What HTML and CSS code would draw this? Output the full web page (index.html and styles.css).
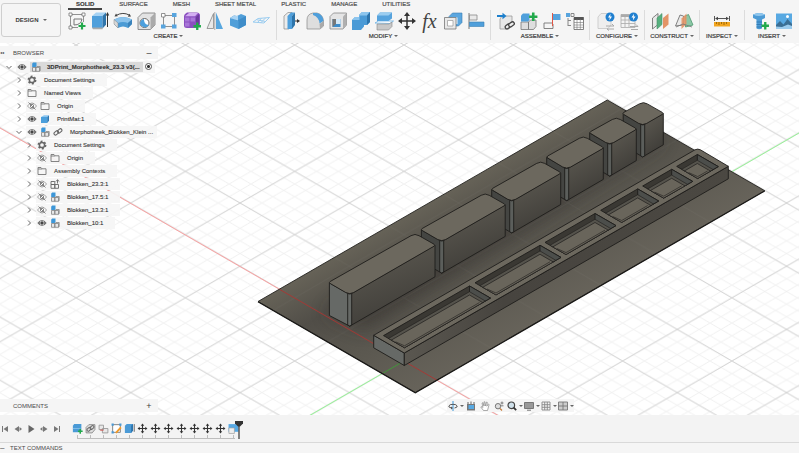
FILE: index.html
```html
<!DOCTYPE html>
<html lang="en">
<head>
<meta charset="utf-8">
<title>3DPrint_Morphotheek_23.3</title>
<link rel="stylesheet" href="styles.css">
</head>
<body>
<svg class="defs" aria-hidden="true">
  <defs>
    <symbol id="plus" viewBox="0 0 8 8"><path d="M4 .5v7M.5 4h7" stroke="#22a94b" stroke-width="2.2"/></symbol>
    <symbol id="eye" viewBox="0 0 10 10"><path d="M.4 5Q5-1.200 9.600 5 5 11.200 .4 5z" fill="#6a6a6a"/><circle cx="5" cy="5" r="2.300" fill="#f0f0f0"/><circle cx="5" cy="5" r="1.700" fill="#444"/></symbol>
    <symbol id="eye-off" viewBox="0 0 10 10"><path d="M.5 5Q5-1 9.500 5 5 11 .5 5z" fill="#fff" stroke="#888" stroke-width=".8"/><circle cx="5" cy="5" r="1.700" fill="none" stroke="#777" stroke-width=".9"/><path d="M1.500 1.500l7 7" stroke="#777" stroke-width=".9"/></symbol>
    <symbol id="gear" viewBox="0 0 10 10"><circle cx="5" cy="5" r="3.700" fill="none" stroke="#666" stroke-width="1.500" stroke-dasharray="1.940 1.940"/><circle cx="5" cy="5" r="2.600" fill="#f5f5f5" stroke="#666" stroke-width="1.500"/></symbol>
    <symbol id="folder" viewBox="0 0 10 10"><path d="M1 8.500v-7h3l1 1.300h4v5.700zM1 3h4" fill="none" stroke="#777" stroke-width=".9"/></symbol>
    <symbol id="body" viewBox="0 0 10 10"><path d="M1 3l3-1.800h5L7.200 3z" fill="#8cc6f0"/><path d="M1 3h6.200v6H1z" fill="#4a9fdc"/><path d="M7.200 3L9 1.200v5.600L7.200 9z" fill="#2c78b4"/></symbol>
    <symbol id="component" viewBox="0 0 10 10"><path d="M1.500 5.500v3.800h3.300V5.500zM4.800 5.500h3.700v3.800H4.800zM4.800 5.500l1-1h3.400v4l-.7.800" fill="#e8e8e8" stroke="#777" stroke-width=".7"/><path d="M1.200 1.500l1-.9h3.300v3.500l-.8.900H1.200z" fill="#3d97d8"/></symbol>
    <symbol id="component-gray" viewBox="0 0 10 10"><path d="M1 2.500h3.800v3H1zM1 5.500v3.800h3.800V5.500zM4.800 5.500h3.700v3.800H4.800zM7.500 4.500V.8M5.800 2.500L7.500.8l1.800 1.700" fill="none" stroke="#666" stroke-width=".9"/></symbol>
    <symbol id="link" viewBox="0 0 10 10"><g fill="none" stroke="#666" stroke-width="1.100"><rect x=".8" y="4.400" width="5" height="3" rx="1.500" transform="rotate(-40 3.300 5.900)"/><rect x="4.200" y="2.400" width="5" height="3" rx="1.500" transform="rotate(-40 6.700 3.900)"/></g></symbol>
    <symbol id="chev-right" viewBox="0 0 10 10"><path d="M4 2.500L6.500 5 4 7.500" fill="none" stroke="#666" stroke-width="1"/></symbol>
    <symbol id="chev-down" viewBox="0 0 10 10"><path d="M2.500 4L5 6.500 7.500 4" fill="none" stroke="#666" stroke-width="1"/></symbol>
    <symbol id="move" viewBox="0 0 10 10"><path d="M5 1.500v7M1.500 5h7" stroke="#333" stroke-width="1"/><path d="M5 .5l1.600 2H3.400zM5 9.500l1.600-2H3.400zM.5 5l2-1.600v3.200zM9.500 5l-2-1.600v3.200z" fill="#333"/></symbol>

    <pattern id="minor" width="21.860" height="12.640" patternUnits="userSpaceOnUse" patternTransform="translate(404 361)">
      <path d="M0 0l21.860 12.640M0 12.640L21.860 0" stroke="#e7e7e7" stroke-width=".6"/>
    </pattern>
    <pattern id="major" width="109.300" height="63.200" patternUnits="userSpaceOnUse" patternTransform="translate(404 361)">
      <path d="M0 0l109.300 63.200M0 63.200L109.300 0" stroke="#cccccc" stroke-width=".8"/>
    </pattern>
    <linearGradient id="side" x1=".3" y1="0" x2=".7" y2="1"><stop offset="0" stop-color="#5c5951"/><stop offset="1" stop-color="#3c3a36"/></linearGradient>
    <linearGradient id="long-side" gradientUnits="userSpaceOnUse" x1="0" y1="0" x2="330" y2="0"><stop offset="0" stop-color="#5a5750"/><stop offset=".3" stop-color="#47443f"/><stop offset="1" stop-color="#4b4842"/></linearGradient>
    <linearGradient id="plate" gradientUnits="userSpaceOnUse" x1="430" y1="190" x2="520" y2="345"><stop offset="0" stop-color="#6b675b"/><stop offset=".3" stop-color="#514e48"/><stop offset=".6" stop-color="#5b5850"/><stop offset="1" stop-color="#69655c"/></linearGradient>
    <filter id="soft" x="-20%" y="-20%" width="140%" height="140%"><feGaussianBlur stdDeviation="9"/></filter>
    <clipPath id="plate-clip"><path d="M258 301.500L607.300 100l157.400 90.700L415.300 392.500z"/></clipPath>
  </defs>
</svg>

<header class="toolbar">
  <button class="workspace">DESIGN <i class="caret"></i></button>
  <div class="ribbon">
    <nav class="tabs">
      <a class="tab active" href="#solid">SOLID</a><a class="tab" href="#surface">SURFACE</a><a class="tab" href="#mesh">MESH</a><a class="tab" href="#sheet">SHEET METAL</a><a class="tab" href="#plastic">PLASTIC</a><a class="tab" href="#manage">MANAGE</a><a class="tab" href="#utilities">UTILITIES</a>
    </nav>
    <div class="groups">
      <section class="group first">
        <div class="tools">
          <button aria-label="Create Sketch"><svg viewBox="0 0 22 22"><path d="M4 4.500h14M4.500 4v14M4 17.500h8M17.500 4v8" fill="none" stroke="#777" stroke-width=".8"/><path d="M3 3h3v3H3zM16 3h3v3h-3zM3 16h3v3H3z" fill="#fff" stroke="#666" stroke-width=".7"/><path d="M8 15V9M8 9h8Q15 15 8 15" fill="none" stroke="#777"/><use href="#plus" x="12" y="12" width="8" height="8"/></svg></button>
          <button aria-label="Extrude"><svg viewBox="0 0 22 22"><path d="M3 6l4-3.500h10L13.500 6z" fill="#a6d2f3"/><path d="M3 6h10.500v12.500H4L3 17.500z" fill="#4f9fdb"/><path d="M13.500 6L17 2.500v12.200l-3.500 3.800z" fill="#2f75ab"/><path d="M3 17.500h10.500v1.800H4z" fill="#aaa"/><path d="M18.500 17V5" stroke="#333" stroke-width="1"/><path d="M18.500 2l1.700 3.500h-3.400z" fill="#333"/></svg></button>
          <button aria-label="Revolve"><svg viewBox="0 0 22 22"><path d="M2 9.500q9-5 18 0v4.500l-4 4q-5-3-10 0l-4-4z" fill="#4b9bd5"/><path d="M2 9.500q9-5 18 0l-4 3.500q-5-2-10 0z" fill="#8bc3ec"/><path d="M16 13l4-3.500V14l-4 4z" fill="#3b83bb"/><path d="M2 9.500L6 13v5l-4-4z" fill="#d8d8d8" stroke="#888" stroke-width=".5"/><path d="M4 5.500q7-4 13.500-.3" fill="none" stroke="#444"/><path d="M2.500 6.500L4 3.500l1.800 2.700zM19 6.500l-3.200.2 1.700-3z" fill="#444"/></svg></button>
          <button aria-label="Hole"><svg viewBox="0 0 22 22"><path d="M3 7.500L7.500 3H20v12l-4.500 4.500H3z" fill="#e3e3e3" stroke="#777" stroke-width=".8"/><path d="M15.500 7.500L20 3v12l-4.500 4.500z" fill="#aaa"/><circle cx="9.500" cy="13" r="4.500" fill="#fff" stroke="#666"/><path d="M9 9q-.5 5.500 5 6a5 5 0 0 1-9-1Q5 10 9 9z" fill="#4da0dd"/></svg></button>
          <button aria-label="Rectangular Pattern"><svg viewBox="0 0 22 22"><path d="M5.500 5.500h11M5.500 5.500v11M7 16.500h8M16.500 7v8" stroke="#777" stroke-width=".8"/><path d="M3.500 3.500H7V7H3.500z" fill="#fff" stroke="#777" stroke-width=".8"/><path d="M14 3h4.500v4H14zM3 14.500h4.500v4H3zM14 14.500h4.500v4H14z" fill="#57a4de"/></svg></button>
          <button aria-label="Create Form"><svg viewBox="0 0 22 22"><path d="M3 6q0-2 3-3.500h10q2 0 3 2v9q0 3-4 4.500H6q-3 0-3-2.500z" fill="#8b4fc0"/><path d="M4 6.200L8 3h9l-3 3.200z" fill="#d3aef2"/><path d="M4 7.500h4.500v4H4zM9.500 7.500H14v4H9.500zM4 12.500h4.500v4H4z" fill="#a876d8"/><path d="M15 7l3-3v12l-3 2z" fill="#6c3a9d"/><use href="#plus" x="12" y="12" width="8.500" height="8.500"/></svg></button>
          <button aria-label="Mirror"><svg viewBox="0 0 22 22"><path d="M9.500 3.500v15H3z" fill="#e8e8e8" stroke="#888" stroke-width=".8"/><path d="M12 2.500l7 16.500h-7z" fill="#58a7df"/><path d="M10.800 2v18" stroke="#888" stroke-width=".7"/></svg></button>
          <button aria-label="Thicken"><svg viewBox="0 0 22 22"><path d="M3 8l7 2V6l4-2 5 2v9l-7.500 4L3 15.500z" fill="#519fd9"/><path d="M3 8l4-2.500 4 .8v4L19 6v9l-7.500 4V11z" fill="#3f8dc9"/><path d="M3 8l4-2.500 4 .5v4.500z" fill="#a9d4f4"/></svg></button>
          <button aria-label="Boundary Fill"><svg viewBox="0 0 22 22"><path d="M3 12l5-3.500 11.500-1L14 13zM6.500 9.700l9 1.800M11.500 8.200l-4 4.300M15.500 8l-5 5M5 12.500l-1-1" fill="none" stroke="#9ccdf0" stroke-width="1"/></svg></button>
        </div>
        <button class="group-label">CREATE <i class="caret"></i></button>
      </section>
      <section class="group">
        <div class="tools">
          <button aria-label="Press Pull"><svg viewBox="0 0 22 22"><path d="M3 6l4-3.500h4L8 6v13H3z" fill="#ececec" stroke="#888" stroke-width=".7"/><path d="M6.500 6L10 2.500h4L11 6v13H6.500z" fill="#4f9fdb"/><path d="M11 6l3-3.500V15l-3 4z" fill="#2d74aa"/><path d="M14 11h3" stroke="#333"/><path d="M19 11l-3-2v4z" fill="#333"/></svg></button>
          <button aria-label="Fillet"><svg viewBox="0 0 22 22"><path d="M3 19V10Q3 4 9 3h4q6 1.500 6.500 8v5L16 19z" fill="#dedede" stroke="#888" stroke-width=".7"/><path d="M9 3h4q6 1.500 6.500 8l-4 2.500Q15 7 9 5z" fill="#4f9fdb"/><path d="M15.500 14l4-3v5L16 19z" fill="#aaa"/></svg></button>
          <button aria-label="Shell"><svg viewBox="0 0 22 22"><path d="M3 6.500L6.500 3h13v12L16 19H3z" fill="#e5e5e5" stroke="#888" stroke-width=".8"/><path d="M16 6.500L19.500 3v12L16 19z" fill="#b0b0b0"/><path d="M5.500 9h8v8h-8z" fill="#3e8dcb"/><path d="M5.500 9H9v5l-3.500 3z" fill="#777"/><path d="M9 9h4.500v5H9z" fill="#d4e9f8"/></svg></button>
          <button aria-label="Combine"><svg viewBox="0 0 22 22"><path d="M2 10l3-3h4V5l3-3h8v10l-3 3h-3v1.500L11 20H2z" fill="#4a9ad6"/><path d="M2 10l3-3h4V5l3-3h8l-3 3.500H9.500V10z" fill="#8cc5ee"/><path d="M17 5.500L20 2v10l-3 3z" fill="#2c74ac"/></svg></button>
          <button aria-label="Split Body"><svg viewBox="0 0 22 22"><path d="M4 5.500L7 2.500h12v6L15.500 11H4z" fill="#56a3dd"/><path d="M4 5.500L7 2.500h12l-3.500 3z" fill="#9bcdf0"/><path d="M2 13l3.500-2h15L17 13.500z" fill="#fff" stroke="#5aa7df" stroke-width=".7"/><path d="M4 14h12l3-2v4.500L15.500 20H4z" fill="#c8c8c8" stroke="#888" stroke-width=".6"/></svg></button>
          <button aria-label="Move"><svg viewBox="0 0 22 22"><path d="M11 4v14M4 11h14" stroke="#333" stroke-width="1.500"/><path d="M11 2l3 4H8zM11 20l3-4H8zM2 11l4-3v6zM20 11l-4-3v6z" fill="#333"/></svg></button>
          <button class="fx" aria-label="Parameters">fx</button>
          <button aria-label="Scale"><svg viewBox="0 0 22 22"><path d="M7 6.500L10.500 3h9.500v9.500L16.500 16H7z" fill="#5aa6df" stroke="#3b7eb1" stroke-width=".6"/><path d="M9.500 7.500h6V14h-6z" fill="#eaf4fb"/><path d="M2.500 7.500H14V19H2.500z" fill="#e9e9e9" stroke="#777" stroke-width=".8"/><path d="M5.500 10.500H11V16H5.500z" fill="#fff" stroke="#888" stroke-width=".6"/></svg></button>
          <button aria-label="Align"><svg viewBox="0 0 22 22"><path d="M4 3v16" stroke="#777"/><path d="M4.500 5H12v5H4.500z" fill="#e9e9e9" stroke="#888" stroke-width=".8"/><path d="M4.500 12H19v4.500H4.500z" fill="#4f9fdb" stroke="#3a7fb4" stroke-width=".6"/></svg></button>
        </div>
        <button class="group-label">MODIFY <i class="caret"></i></button>
      </section>
      <section class="group">
        <div class="tools">
          <button aria-label="Insert Component"><svg viewBox="0 0 22 22"><path d="M5 9l2-3h10v9l-3 4H5z" fill="#e7e7e7" stroke="#999" stroke-width=".8"/><path d="M2 6h6" stroke="#1d7fcc" stroke-width="2"/><path d="M11.500 6L7.500 2.800v6.400z" fill="#1d7fcc"/><g fill="#eee" stroke="#444" stroke-width="1.300"><rect x="10" y="14.500" width="6" height="3.600" rx="1.800" transform="rotate(-35 13 16.300)"/><rect x="13.500" y="12.500" width="6" height="3.600" rx="1.800" transform="rotate(-35 16.500 14.300)"/></g></svg></button>
          <button aria-label="New Component"><svg viewBox="0 0 22 22"><path d="M3 12h7.500v7.500H3zM10.500 12l2-2H18v6.500L15.500 19.500h-5z" fill="#dedede" stroke="#777" stroke-width=".8"/><path d="M3 5.500L5 3.500h6.500V10l-1.500 1.500H3z" fill="#4f9fdb"/><use href="#plus" x="10.500" y="2" width="9.500" height="9.500"/></svg></button>
          <button aria-label="Joint"><svg viewBox="0 0 22 22"><path d="M3 13h8M3 13v5.500h9V14" fill="none" stroke="#777" stroke-width=".9"/><path d="M11.500 4h8v6h-8z" fill="#57a4de"/><path d="M11.500 3v13" stroke="#e05545" stroke-width="1" fill="none"/></svg></button>
          <button aria-label="Bill of Materials"><svg viewBox="0 0 22 22"><path d="M2 3h4v4H2z" fill="#57a4de"/><path d="M7 3.500h3v3H7zM4 8v8M4 10.500h3M4 15.500h3" fill="none" stroke="#888"/><path d="M10 7.500h9.500v12H10z" fill="#fff" stroke="#666" stroke-width=".8"/><path d="M10 7h9.500v3H10z" fill="#555"/><path d="M10 12.500h9.500M10 15h9.500M10 17.300h9.500M13 9v10M16.300 9v10" stroke="#777" stroke-width=".6"/></svg></button>
        </div>
        <button class="group-label">ASSEMBLE <i class="caret"></i></button>
      </section>
      <section class="group roomy">
        <div class="tools">
          <button aria-label="Configure Design"><svg viewBox="0 0 22 22"><path d="M3 7l3-3.500h10V15l-3 3.500H3z" fill="#eee" stroke="#c5c5c5" stroke-width=".8"/><circle cx="15" cy="7" r="4.500" fill="#2180d0"/><path d="M15.500 3.800L13 7.500h1.800l-.5 3 2.700-4h-1.800z" fill="#fff"/><path d="M11 16h8M17 14l2 2M19 19h-7l2 1.500" fill="none" stroke="#aaa"/></svg></button>
          <button aria-label="Configuration Table"><svg viewBox="0 0 22 22"><path d="M3 4.500h14v13H3z" fill="#f4f4f4" stroke="#aaa" stroke-width=".8"/><path d="M3 4.500h14v2.500H3z" fill="#aaa"/><path d="M3 10h14M3 13.500h14M7 7v10M11 7v10" stroke="#aaa" stroke-width=".8"/><circle cx="15.500" cy="7" r="4.500" fill="#2180d0"/><path d="M16 3.800l-2.500 3.700h1.800l-.5 3 2.700-4h-1.800z" fill="#fff"/><path d="M12 16.500h8M18 14.500l2 2M20 19.500h-7" fill="none" stroke="#aaa"/></svg></button>
        </div>
        <button class="group-label">CONFIGURE <i class="caret"></i></button>
      </section>
      <section class="group roomy">
        <div class="tools">
          <button aria-label="Offset Plane"><svg viewBox="0 0 22 22"><path d="M2.500 8L8 3.500v11L2.500 19z" fill="#e9e9e9" stroke="#666" stroke-width=".8"/><path d="M7 8l5-4.500v11L7 19z" fill="#56b07e" stroke="#4c8f6a" stroke-width=".6"/><path d="M13 8l5.500-4.500v11L13 19z" fill="#e39467"/></svg></button>
          <button aria-label="Plane at Angle"><svg viewBox="0 0 22 22"><path d="M2.500 16L7 5l3.500 1v9z" fill="#e9e9e9" stroke="#666" stroke-width=".8"/><path d="M12 6l3.500-1.500L20 15l-7.500 2z" fill="#8cc7a6" stroke="#4c9a70" stroke-width=".8"/><path d="M8.500 8.500l5-5V14l-5 5z" fill="#e39467" fill-opacity=".9"/><path d="M3 17l7-3 9 3" fill="none" stroke="#777" stroke-width=".8"/></svg></button>
        </div>
        <button class="group-label">CONSTRUCT <i class="caret"></i></button>
      </section>
      <section class="group roomy inspect">
        <div class="tools">
          <button aria-label="Measure"><svg viewBox="0 0 22 22"><path d="M3.500 6v5M18.500 6v5M5 8.500h12" stroke="#444" stroke-width=".9"/><path d="M4 8.500l3-1.700v3.400zM18 8.500l-3-1.700v3.400z" fill="#444"/><path d="M3 12h16v4.500H3z" fill="#f2a51f"/><path d="M5.500 12v2M8 12v3M10.500 12v2M13 12v3M15.500 12v2" stroke="#8c5a00" stroke-width=".8"/></svg></button>
        </div>
        <button class="group-label">INSPECT <i class="caret"></i></button>
      </section>
      <section class="group roomy last">
        <div class="tools">
          <button aria-label="Insert Fastener"><svg viewBox="0 0 22 22"><path d="M3 4.500Q9 1.500 15 4.500V8l-3 1.500v9Q9 20 6.500 18.500v-9L3 8z" fill="#4d9bd5"/><path d="M3 4.500Q9 1.500 15 4.500 9 7.500 3 4.500z" fill="#8fc6ed"/><path d="M6.500 12h5.500M6.500 14.500h5.500M6.500 17h5.500" stroke="#2c74ac" stroke-width=".8"/><use href="#plus" x="11" y="11.500" width="8.500" height="8.500"/></svg></button>
          <button aria-label="Canvas"><svg viewBox="0 0 22 22"><path d="M3 3.500h16v15.500H3z" fill="#58a9e2"/><path d="M3 15l4-4 3.500 3.500 4-5.500L19 14v5H3z" fill="#3a6e94"/><path d="M3 16.500l6 .5 6-2.500 4 1.500v3H3z" fill="#9bcbed"/><circle cx="14.500" cy="6.500" r="1.500" fill="#fff"/></svg></button>
        </div>
        <button class="group-label">INSERT <i class="caret"></i></button>
      </section>
    </div>
  </div>
</header>

<main class="viewport">
  <svg class="scene" viewBox="0 43 799 372" preserveAspectRatio="xMidYMid slice" role="img" aria-label="Blocks and tray on a print plate">
    <path d="M0 43h799v372H0z" fill="#fff"/>
    <path d="M0 43h799v372H0z" fill="url(#minor)"/>
    <path d="M0 43h799v372H0z" fill="url(#major)"/>
    <path d="M0 128l498 287.400" stroke="#fb9a9a" stroke-width=".9"/>
    <path d="M310 415.300L799 133" stroke="#8ef58e" stroke-width=".9"/>
    <path d="M258 301.500L607.300 100l157.400 90.700L415.300 392.500z" fill="url(#plate)"/>
    <g clip-path="url(#plate-clip)">
      <path d="M325 312L640 130l25 10-300 190z" fill="#34322e" opacity=".6" filter="url(#soft)"/>
      <path d="M0 43h799v372H0z" fill="url(#major)" opacity=".06"/>
      <path d="M0 128l498 287.400" stroke="#a93431" stroke-width=".9"/>
      <path d="M310 415.300L404 361" stroke="#3d9a35" stroke-width=".9"/>
    </g>
    <path d="M258 301.500L607.300 100l157.400 90.700L415.300 392.500z" fill="none" stroke="#22211e" stroke-width=".9"/>
    <path d="M258 301.800l157.300 91 349.400-201.800" fill="none" stroke="#1a1917" stroke-width="1.200"/>

    <g class="edge">
      <g transform="translate(642.700 125.400)">
        <path class="end" d="M0 0l-19.500-11.500v31.500l19.500 11.500z"/><path class="side" d="M0 0l20.600-11.900v31.300L0 31.500z"/>
        <path class="top" d="M-4-2Q0 .3 4-2L19.600-11q1.500-1 0-2L4.600-21.500Q1-24-3.400-21.500L-19-13q-1.500 1 0 2z"/>
        <path class="round" d="M-2-1v31.500l2 1 2-1V-1L0-.5z"/>
      </g>
      <g transform="translate(609.700 144.500)">
        <path class="end" d="M0 0l-20-11.600v31.600l20 11.600z"/><path class="side" d="M0 0l26.600-15.400v31.500L0 31.700z"/>
        <path class="top" d="M-4-2Q0 .3 4-2L25.600-14.500q1.500-1 0-2L10.600-25Q6.600-27.500 2.600-25L-19-13q-1.500 1 0 2z"/>
        <path class="round" d="M-2-1v31.500l2 1 2-1V-1L0-.5z"/>
      </g>
      <g transform="translate(566.700 169)">
        <path class="end" d="M0 0l-20-11.600v31.600l20 11.600z"/><path class="side" d="M0 0l36.600-21.100v31.500L0 31.700z"/>
        <path class="top" d="M-4-2Q0 .3 4-2L35.600-20.200q1.500-1 0-2L20.600-30.700Q16.600-33.200 12.600-30.700L-19-13q-1.500 1 0 2z"/>
        <path class="round" d="M-2-1v31.500l2 1 2-1V-1L0-.5z"/>
      </g>
      <g transform="translate(511.700 201.300)">
        <path class="end" d="M0 0l-20-11.600v31.600l20 11.600z"/><path class="side" d="M0 0l49-28.300v31.500L0 31.700z"/>
        <path class="top" d="M-4-2Q0 .3 4-2L48-27.400q1.500-1 0-2L33-37.900Q29-40.400 25-37.900L-19-13q-1.500 1 0 2z"/>
        <path class="round" d="M-2-1v31.500l2 1 2-1V-1L0-.5z"/>
      </g>
      <g transform="translate(441.700 241.500)">
        <path class="end" d="M0 0l-20.300-11.600v31.600l20.300 11.600z"/><path class="side" d="M0 0l63.500-36.600v31.500L0 31.700z"/>
        <path class="top" d="M-4-2Q0 .3 4-2L62.500-35.700q1.500-1 0-2L47.500-46.200Q43.500-48.700 39.500-46.200L-19.500-13q-1.500 1 0 2z"/>
        <path class="round" d="M-2-1v31.500l2 1 2-1V-1L0-.5z"/>
      </g>
      <g transform="translate(349.700 294.500)">
        <path class="end lit" d="M0 0l-20.300-11.600v32.600l20.300 10.600z"/><path class="side" d="M0 0l85.300-49.200v31.500L0 31.700z"/>
        <path class="top" d="M-4-2Q0 .3 4-2L84.300-48.300q1.500-1 0-2L69.300-58.800Q65.300-61.300 61.300-58.800L-19.500-13q-1.500 1 0 2z"/>
        <path class="round lit" d="M-2-1v31.500l2 1 2-1V-1L0-.5z"/>
      </g>
    </g>

    <g class="edge">
      <path class="end lit" d="M404.300 353l-30.600-17.700v12.500l30.600 17.700z"/>
      <g transform="translate(404.300 353)"><path d="M0 0l324-186.700v12.500L0 12.500z" fill="url(#long-side)"/></g>
      <path class="top" d="M373.700 335.300L695 149.800q2.700-1.400 5.400 0l27.900 16.500L404.300 353z"/>
      <g transform="translate(383.500 335.600)">
        <path class="pit" d="M0 0l86-49.600 21 12.100-86 49.600z"/><path class="pit-end" d="M86-49.600l21 12.100-7.800 4.500-13.200-7.600z"/>
        <path class="ledge" d="M5 2.900l81-46.800 15.800 9.300-80.800 46.700z"/><path class="floor" d="M7.800 4.500l78.200-45.100 13.200 7.600-78.200 45.100z"/><path class="line" d="M12 6.200l9 4 75-43.300"/>
      </g>
      <g transform="translate(475 282.800)">
        <path class="pit" d="M0 0l65-37.500 21 12.100-65 37.500z"/><path class="pit-end" d="M65-37.500l21 12.100-7.800 4.500-13.200-7.600z"/>
        <path class="ledge" d="M5 2.900l60-34.700 15.800 9.300-59.800 34.600z"/><path class="floor" d="M7.800 4.500l57.200-33 13.200 7.600-57.200 33z"/><path class="line" d="M12 6.200l9 4 54-31.200"/>
      </g>
      <g transform="translate(545 242.400)">
        <path class="pit" d="M0 0l50-28.900 21 12.100-50 28.900z"/><path class="pit-end" d="M50-28.900l21 12.100-7.800 4.500-13.200-7.600z"/>
        <path class="ledge" d="M5 2.900l45-26 15.800 9.300-44.800 25.900z"/><path class="floor" d="M7.800 4.500l42.200-24.400 13.200 7.600-42.200 24.400z"/><path class="line" d="M12 6.200l9 4 39-22.500"/>
      </g>
      <g transform="translate(600.700 210.300)">
        <path class="pit" d="M0 0l37-21.400 21 12.100-37 21.400z"/><path class="pit-end" d="M37-21.400l21 12.100-7.800 4.500-13.200-7.600z"/>
        <path class="ledge" d="M5 2.900l32-18.500 15.800 9.300-31.800 18.400z"/><path class="floor" d="M7.800 4.500l29.200-16.900 13.200 7.600-29.200 16.900z"/><path class="line" d="M12 6.200l9 4 26-15"/>
      </g>
      <g transform="translate(642.700 186)">
        <path class="pit" d="M0 0l29-16.700 21 12.100-29 16.700z"/><path class="pit-end" d="M29-16.700l21 12.100-7.800 4.500-13.200-7.600z"/>
        <path class="ledge" d="M5 2.900l24-13.800 15.800 9.300-23.800 13.700z"/><path class="floor" d="M7.800 4.500l21.200-12.200 13.200 7.600-21.200 12.200z"/><path class="line" d="M12 6.200l9 4 18-10.400"/>
      </g>
      <g transform="translate(676.700 166.400)">
        <path class="pit" d="M0 0l20.600-11.900 21 12.100-20.600 11.900z"/><path class="pit-end" d="M20.600-11.900l21 12.100-7.800 4.500-13.200-7.600z"/>
        <path class="ledge" d="M5 2.900l15.600-9 15.800 9.300-15.400 8.900z"/><path class="floor" d="M7.800 4.500l12.800-7.400 13.200 7.600-12.800 7.400z"/><path class="line" d="M12 6.200l9 4 10-5.700"/>
      </g>
    </g>
  </svg>

  <aside class="browser">
    <div class="panel-head"><span class="collapse">◂◂</span><h2>BROWSER</h2><button aria-label="Minimize browser">–</button></div>
    <ul class="tree">
      <li class="l0"><button aria-label="Collapse"><svg><use href="#chev-down"/></svg></button><div class="node"><svg><use href="#eye"/></svg><span class="root"><svg><use href="#component"/></svg><b>3DPrint_Morphotheek_23.3 v3(...</b></span><input type="radio" checked aria-label="Activate component"></div></li>
      <li class="l1"><button aria-label="Expand"><svg><use href="#chev-right"/></svg></button><div class="node"><svg><use href="#gear"/></svg><span>Document Settings</span></div></li>
      <li class="l1"><button aria-label="Expand"><svg><use href="#chev-right"/></svg></button><div class="node"><svg><use href="#folder"/></svg><span>Named Views</span></div></li>
      <li class="l1"><button aria-label="Expand"><svg><use href="#chev-right"/></svg></button><div class="node"><svg><use href="#eye-off"/></svg><svg><use href="#folder"/></svg><span>Origin</span></div></li>
      <li class="l1"><button aria-label="Expand"><svg><use href="#chev-right"/></svg></button><div class="node"><svg><use href="#eye"/></svg><svg><use href="#body"/></svg><span>PrintMat:1</span></div></li>
      <li class="l1"><button aria-label="Collapse"><svg><use href="#chev-down"/></svg></button><div class="node long"><svg><use href="#eye"/></svg><svg><use href="#component"/></svg><svg><use href="#link"/></svg><span>Morphotheek_Blokken_Klein ...</span></div></li>
      <li class="l2"><button aria-label="Expand"><svg><use href="#chev-right"/></svg></button><div class="node"><svg><use href="#gear"/></svg><span>Document Settings</span></div></li>
      <li class="l2"><button aria-label="Expand"><svg><use href="#chev-right"/></svg></button><div class="node"><svg><use href="#eye-off"/></svg><svg><use href="#folder"/></svg><span>Origin</span></div></li>
      <li class="l2"><button aria-label="Expand"><svg><use href="#chev-right"/></svg></button><div class="node"><svg><use href="#folder"/></svg><span>Assembly Contexts</span></div></li>
      <li class="l2"><button aria-label="Expand"><svg><use href="#chev-right"/></svg></button><div class="node"><svg><use href="#eye-off"/></svg><svg><use href="#component-gray"/></svg><span>Blokken_23.3:1</span></div></li>
      <li class="l2"><button aria-label="Expand"><svg><use href="#chev-right"/></svg></button><div class="node"><svg><use href="#eye-off"/></svg><svg><use href="#component"/></svg><span>Blokken_17.5:1</span></div></li>
      <li class="l2"><button aria-label="Expand"><svg><use href="#chev-right"/></svg></button><div class="node"><svg><use href="#eye-off"/></svg><svg><use href="#component"/></svg><span>Blokken_13.3:1</span></div></li>
      <li class="l2"><button aria-label="Expand"><svg><use href="#chev-right"/></svg></button><div class="node"><svg><use href="#eye"/></svg><svg><use href="#component"/></svg><span>Blokken_10:1</span></div></li>
    </ul>
  </aside>

  <div class="comments panel-head"><h2>COMMENTS</h2><button aria-label="Add comment">+</button></div>

  <div class="navbar">
    <button class="drop" aria-label="Orbit"><svg viewBox="0 0 10 10"><path d="M5 0v10" stroke="#3d97d8"/><path d="M3.500 7Q.5 6.500.8 5 1.500 3.300 5 3.300T9.200 5Q9.500 6.500 6.500 7" fill="none" stroke="#555"/><path d="M3 5.500v3L5 7z" fill="#555"/></svg><i class="caret"></i></button>
    <button aria-label="Look At"><svg viewBox="0 0 10 10"><path d="M1 3h8v6.500H1z" fill="#777"/><path d="M2.500 4h5.500v4H2.500z" fill="#58a9e2"/><path d="M2 1v2M5 .5V3M8 1v2" stroke="#666"/></svg></button>
    <button aria-label="Pan"><svg viewBox="0 0 10 10"><path d="M3.500 9.500L.8 6l1-.5L3 6.500 2 2l.8-.3L4 5V.8h.9L5.300 5 6.500 1l.8.300L6.800 5.200 8.500 3l.6.500L7.500 9.500z" fill="#fff" stroke="#888" stroke-width=".7"/></svg></button>
    <button aria-label="Zoom"><svg viewBox="0 0 10 10"><circle cx="4" cy="5.200" r="2.700" fill="#ddd" stroke="#777"/><path d="M6 7.500l2 2" stroke="#c77d3a" stroke-width="1.300"/><path d="M8 .5v3M6.500 2h3M7 4.800h2.500" stroke="#666" stroke-width=".8"/></svg></button>
    <button class="drop" aria-label="Fit"><svg viewBox="0 0 10 10"><circle cx="4.300" cy="4.300" r="3.300" fill="#cfe0ea" stroke="#444" stroke-width="1.200"/><path d="M6.700 6.700l2.500 2.500" stroke="#333" stroke-width="1.800"/></svg><i class="caret"></i></button>
    <button class="drop" aria-label="Display Settings"><svg viewBox="0 0 10 10"><path d="M.5 1.500h9V7.500h-9z" fill="#999" stroke="#777"/><path d="M3 9.200h4" stroke="#777"/></svg><i class="caret"></i></button>
    <button class="drop" aria-label="Grid and Snaps"><svg viewBox="0 0 10 10"><path d="M1 1h8v8H1zM1 3.700h8M1 6.300h8M3.700 1v8M6.300 1v8" fill="none" stroke="#888" stroke-width=".9"/></svg><i class="caret"></i></button>
    <button class="drop" aria-label="Viewports"><svg viewBox="0 0 10 10"><path d="M.5 1h9v8h-9zM5 1v8M.5 5h9" fill="#ccc" stroke="#777" stroke-width=".9"/></svg><i class="caret"></i></button>
  </div>
</main>

<footer>
  <div class="timeline">
    <div class="playback">
      <button aria-label="Go to start"><svg viewBox="0 0 10 10"><path d="M2.500 2v6" stroke="#777"/><path d="M8 2v6L3.500 5z" fill="#777"/></svg></button>
      <button aria-label="Step back"><svg viewBox="0 0 10 10"><path d="M6 2v6L1.500 5zM6.500 3L9 5 6.500 7z" fill="#777"/></svg></button>
      <button aria-label="Play"><svg viewBox="0 0 10 10"><path d="M2.500 1v8l6-4z" fill="#666"/></svg></button>
      <button aria-label="Step forward"><svg viewBox="0 0 10 10"><path d="M4 2v6l4.500-3zM3.500 3L1 5l2.500 2z" fill="#777"/></svg></button>
      <button aria-label="Go to end"><svg viewBox="0 0 10 10"><path d="M7.500 2v6" stroke="#777"/><path d="M2 2v6l4.500-3z" fill="#777"/></svg></button>
    </div>
    <ol class="features">
      <li><svg viewBox="0 0 10 10"><path d="M.8 2.500L2 1h6.500v6L7.500 8.500H.8z" fill="#4a9ad6"/><path d="M.8 5h7" stroke="#9bcdf0" stroke-width=".6"/><use href="#plus" x="5" y="5" width="5" height="5"/></svg></li>
      <li><svg viewBox="0 0 10 10"><path d="M1 4l2.500-2.500H9V6L6.500 9H1z" fill="#ddd" stroke="#888" stroke-width=".8"/><use href="#link" x="1" y="1" width="8" height="8"/></svg></li>
      <li><svg viewBox="0 0 10 10"><path d="M1 2h4v4H1zM4 5h5v4H4z" fill="#e8e8e8" stroke="#999" stroke-width=".8"/><path d="M2 6.500h3" stroke="#d0605a"/></svg></li>
      <li><svg viewBox="0 0 10 10"><path d="M1.500 1.500h7v7h-7z" fill="#fff" stroke="#777" stroke-width=".8"/><path d="M.5.500h2v2h-2zM7.500.500h2v2h-2zM.5 7.500h2v2h-2z" fill="#4a9ad6"/><path d="M4.500 9l4.500-5" stroke="#f09a2a" stroke-width="1.700"/></svg></li>
      <li><svg viewBox="0 0 10 10"><path d="M.8 2.500L2.500.8h5.700v6L6.500 9H.8z" fill="#4a9ad6"/><path d="M6.500 2.500L8.200.8v6L6.500 9z" fill="#2c74ac"/><path d="M9.300 8V1" stroke="#555" stroke-width=".8"/></svg></li>
      <li><svg><use href="#move"/></svg></li><li><svg><use href="#move"/></svg></li><li><svg><use href="#move"/></svg></li><li><svg><use href="#move"/></svg></li><li><svg><use href="#move"/></svg></li><li><svg><use href="#move"/></svg></li><li><svg><use href="#move"/></svg></li>
      <li class="current"><svg viewBox="0 0 10 10"><path d="M.5 1h9v7h-9z" fill="#57a9e4"/><path d="M.8 4.500h5v5h-5z" fill="#eee" stroke="#999" stroke-width=".6"/></svg><svg class="marker" viewBox="0 0 8 18"><path d="M0 0h8v2.500L5 5.500H3L0 2.500z" fill="#333"/><path d="M4 4v14" stroke="#333" stroke-width="1.200"/></svg></li>
    </ol>
  </div>
  <div class="text-commands"><span class="dash">–</span><h2>TEXT COMMANDS</h2></div>
</footer>
</body>
</html>
```
FILE: styles.css
```css
* { box-sizing: border-box; }

body {
  margin: 0;
  height: 100vh;
  display: flex;
  flex-direction: column;
  overflow: hidden;
  background: #f4f4f4;
  color: #3c3c3c;
  font: 6px/8px "Liberation Sans", Arial, sans-serif;
}

button {
  margin: 0;
  padding: 0;
  border: 0;
  background: none;
  color: inherit;
  font: inherit;
  display: flex;
  align-items: center;
  justify-content: center;
}

h2 { margin: 0; font: inherit; color: #4a4a4a; }
ul, ol { margin: 0; padding: 0; list-style: none; }
.defs { position: absolute; width: 0; height: 0; }

.caret {
  display: inline-block;
  margin-left: 2px;
  border: 2px solid transparent;
  border-top-color: #666;
  border-bottom-width: 0;
}

/* toolbar */
.toolbar { display: flex; height: 43px; flex: none; background: #f5f5f5; }

.workspace {
  width: 60px;
  height: 34px;
  margin: 3px 2px 0 1px;
  flex: none;
  border: 1px solid #cfcfcf;
  border-radius: 3px;
  font-weight: bold;
}
.workspace .caret { margin-left: 4px; }

.ribbon { flex: 1; min-width: 0; }
.tabs { display: flex; gap: 9px; height: 10px; padding-left: 5px; }
.tab {
  height: 10px;
  padding: 0 8px;
  color: #505050;
  text-decoration: none;
  white-space: nowrap;
  -webkit-text-stroke: 0.2px #505050;
}
.tab.active { border-bottom: 2px solid #444; color: #333; font-weight: bold; }

.groups { display: flex; }
.group {
  display: flex;
  flex-direction: column;
  align-items: center;
  height: 30px;
  padding: 0 3px;
  border-right: 1px solid #dcdcdc;
  white-space: nowrap;
}
.group.first { padding: 0 4px 0 2px; }
.group.roomy { padding: 0 4px; }
.group.inspect { min-width: 45px; }
.group.last { border-right: 0; }
.tools { display: flex; height: 22px; }
.tools button { width: 23px; height: 22px; }
.tools svg { width: 22px; height: 22px; }
.tools .fx { font: italic 20px/20px "Liberation Serif", serif; color: #444; }
.group-label { height: 8px; -webkit-text-stroke: 0.2px #3c3c3c; }

/* canvas */
.viewport {
  position: relative;
  flex: 1;
  min-height: 0;
  display: flex;
  flex-direction: column;
  justify-content: space-between;
  align-items: flex-start;
  padding: 3px 0;
}
.scene { position: absolute; inset: 0; width: 100%; height: 100%; }
.edge path { stroke: #1e1d1b; stroke-width: 0.9; stroke-linejoin: round; }
.edge .top { fill: #6c685e; }
.edge .side { fill: url(#side); }
.edge .end { fill: #444542; }
.edge .round { fill: #5b5e5b; }
.edge .lit { fill: #666966; }
.edge .pit { fill: #3a3833; }
.edge .pit-end { fill: #4c4e4b; }
.edge .ledge { fill: #55534c; stroke-width: 0.6; }
.edge .floor { fill: #69655b; stroke-width: 0.7; }
.edge .line { fill: none; stroke-width: 0.6; }

.browser, .comments { position: relative; width: 158px; }
.panel-head {
  display: flex;
  align-items: center;
  height: 13px;
  padding-right: 4px;
  background: #f5f5f5;
}
.panel-head h2 { flex: 1; }
.panel-head button { width: 10px; font-size: 9px; }
.collapse { width: 13px; font-size: 4px; }
.comments { padding-left: 13px; }

.tree { padding-top: 1px; }
.tree li { display: flex; height: 13px; align-items: center; }
.tree .l0 { padding-left: 3px; }
.tree .l1 { padding-left: 13px; }
.tree .l2 { padding-left: 23px; }
.tree li > button { width: 13px; height: 13px; }
.tree svg { width: 10px; height: 10px; margin: 0 2px 0 1px; flex: none; }
.node {
  display: flex;
  align-items: center;
  height: 12px;
  padding-right: 12px;
  background: rgba(245, 245, 245, 0.92);
  white-space: nowrap;
  color: #333;
}
.node.long { padding-right: 4px; }
.node span { padding-left: 5px; -webkit-text-stroke: 0.1px #333; }
.l0 .node { padding-right: 3px; }
.node .root {
  display: flex;
  align-items: center;
  height: 10px;
  padding: 0 3px 0 0;
  margin-left: 1px;
  background: #dadada;
}
.root b { padding-left: 4px; }
.node input {
  appearance: none;
  width: 7px;
  height: 7px;
  margin: 0 0 0 2px;
  border: 1px solid #555;
  border-radius: 50%;
  background: radial-gradient(#333 0 1px, #fff 2px);
}

.navbar {
  position: absolute;
  left: 56%;
  bottom: 3px;
  display: flex;
  align-items: center;
  height: 13px;
  background: #f5f5f5;
}
.navbar button { width: 14px; height: 13px; }
.navbar .drop { width: 17px; }
.navbar svg { width: 10px; height: 10px; }
.navbar .caret { margin-left: 2px; }

/* timeline */
footer { flex: none; }
.timeline { display: flex; gap: 8px; height: 27px; background: #f3f3f3; }
.playback { display: flex; height: 27px; margin-left: -2px; }
.playback button { width: 13px; }
.playback svg { width: 10px; height: 10px; }
.features { display: flex; }
.features li { position: relative; width: 13px; padding: 8px 1px; }
.features svg { display: block; width: 11px; height: 11px; }
.features li::after {
  content: "";
  position: absolute;
  left: 6px;
  top: 20px;
  width: 100%;
  height: 3px;
  border: solid #bdbdbd;
  border-width: 0 0 1px 1px;
}
.features li:last-child::after { width: 1px; }
.features .marker { position: absolute; left: 8px; top: 6px; width: 8px; height: 18px; }

.text-commands {
  display: flex;
  align-items: center;
  height: 11px;
  border-top: 1px solid #d9d9d9;
  background: #f5f5f5;
}
.dash { width: 10px; font-size: 8px; }
```
